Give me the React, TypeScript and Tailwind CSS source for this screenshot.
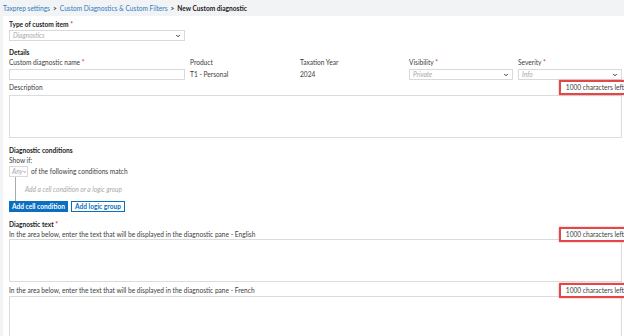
import { ChevronDown } from "lucide-react";

function Select({ placeholder, width }: { placeholder: string; width: string }) {
  return (
    <div className={`flex h-[11px] items-center justify-between border border-[#d9d9d9] bg-white pl-[3px] pr-[3px] ${width}`}>
      <span className="italic text-[#a8a8a8]">{placeholder}</span>
      <ChevronDown size={6} strokeWidth={4} className="text-[#333]" />
    </div>
  );
}

function Counter() {
  return (
    <span className="-my-[3px] -mr-[6px] flex h-[15px] items-center border-2 border-[#e2474a] bg-white pl-[5px] pr-[2px] text-[#3c3c3c] shadow-[0_0_2px_rgba(226,71,74,0.5)]">
      1000 characters left
    </span>
  );
}

function Req() {
  return <span className="text-[#d4343b]"> *</span>;
}

export default function App() {
  return (
    <div className="h-[336px] w-[624px] overflow-hidden bg-[#f2f3f5] text-[6.6px] leading-[9px] text-[#3c3c3c] [font-family:Lato,'Liberation_Sans',sans-serif]">
      {/* breadcrumb */}
      <div className="flex h-[16px] items-center gap-[3px] px-[3px] text-[#2d7bbf]">
        <span>Taxprep settings</span>
        <span className="font-bold text-[#333]">&gt;</span>
        <span>Custom Diagnostics &amp; Custom Filters</span>
        <span className="font-bold text-[#333]">&gt;</span>
        <span className="font-bold text-[#222]">New Custom diagnostic</span>
      </div>

      <div className="ml-[3px] h-[320px] bg-white pl-[6px] pr-[2px] pt-[4px]">
        <div className="font-bold text-[#222]">
          Type of custom item<Req />
        </div>
        <div className="mt-[1px]">
          <Select placeholder="Diagnostics" width="w-[176px]" />
        </div>

        <div className="mt-[7px] font-bold text-[#222]">Details</div>
        <div className="mt-[1px] grid grid-cols-[176px_105px_104px_104px_104px] gap-x-[5px]">
          <div>Custom diagnostic name<Req /></div>
          <div>Product</div>
          <div>Taxation Year</div>
          <div>Visibility<Req /></div>
          <div>Severity<Req /></div>
        </div>
        <div className="mt-[2px] grid grid-cols-[176px_105px_104px_104px_104px] gap-x-[5px]">
          <div className="h-[11px] border border-[#d9d9d9]" />
          <div className="flex items-center">T1 - Personal</div>
          <div className="flex items-center">2024</div>
          <Select placeholder="Private" width="w-[104px]" />
          <Select placeholder="Info" width="w-[104px]" />
        </div>

        <div className="mt-[3px] flex h-[9px] items-center justify-between">
          <span>Description</span>
          <Counter />
        </div>
        <div className="mt-[3px] h-[43px] border border-[#dcdcdc]" />

        <div className="mt-[8px] font-bold text-[#222]">Diagnostic conditions</div>
        <div className="mt-[1px]">Show if:</div>
        <div className="mt-[1px] flex h-[11px] items-center gap-[3px]">
          <div className="flex h-[11px] w-[19px] items-center justify-between border border-[#d9d9d9] pl-[2px] pr-[1px]">
            <span className="italic text-[#a8a8a8]">Any</span>
            <ChevronDown size={6} strokeWidth={4} className="text-[#333]" />
          </div>
          <span>of the following conditions match</span>
        </div>
        <div className="ml-[6px] flex h-[24px] items-center border-l border-[#aaa] pl-[9px] italic text-[#a8a8a8]">
          Add a cell condition or a logic group
        </div>
        <div className="flex gap-[3px]">
          <button className="flex h-[11px] items-center bg-[#0a6fc0] px-[3px] font-bold text-white">
            Add cell condition
          </button>
          <button className="flex h-[11px] items-center border border-[#0a6fc0] px-[3px] font-bold text-[#0a6fc0]">
            Add logic group
          </button>
        </div>

        <div className="mt-[8px] font-bold text-[#222]">
          Diagnostic text<Req />
        </div>
        <div className="mt-[1px] flex h-[9px] items-center justify-between">
          <span>In the area below, enter the text that will be displayed in the diagnostic pane - English</span>
          <Counter />
        </div>
        <div className="h-[43px] border border-[#dcdcdc]" />

        <div className="mt-[4px] flex h-[9px] items-center justify-between">
          <span>In the area below, enter the text that will be displayed in the diagnostic pane - French</span>
          <Counter />
        </div>
        <div className="mt-[1px] h-[43px] border border-[#dcdcdc]" />
      </div>
    </div>
  );
}
